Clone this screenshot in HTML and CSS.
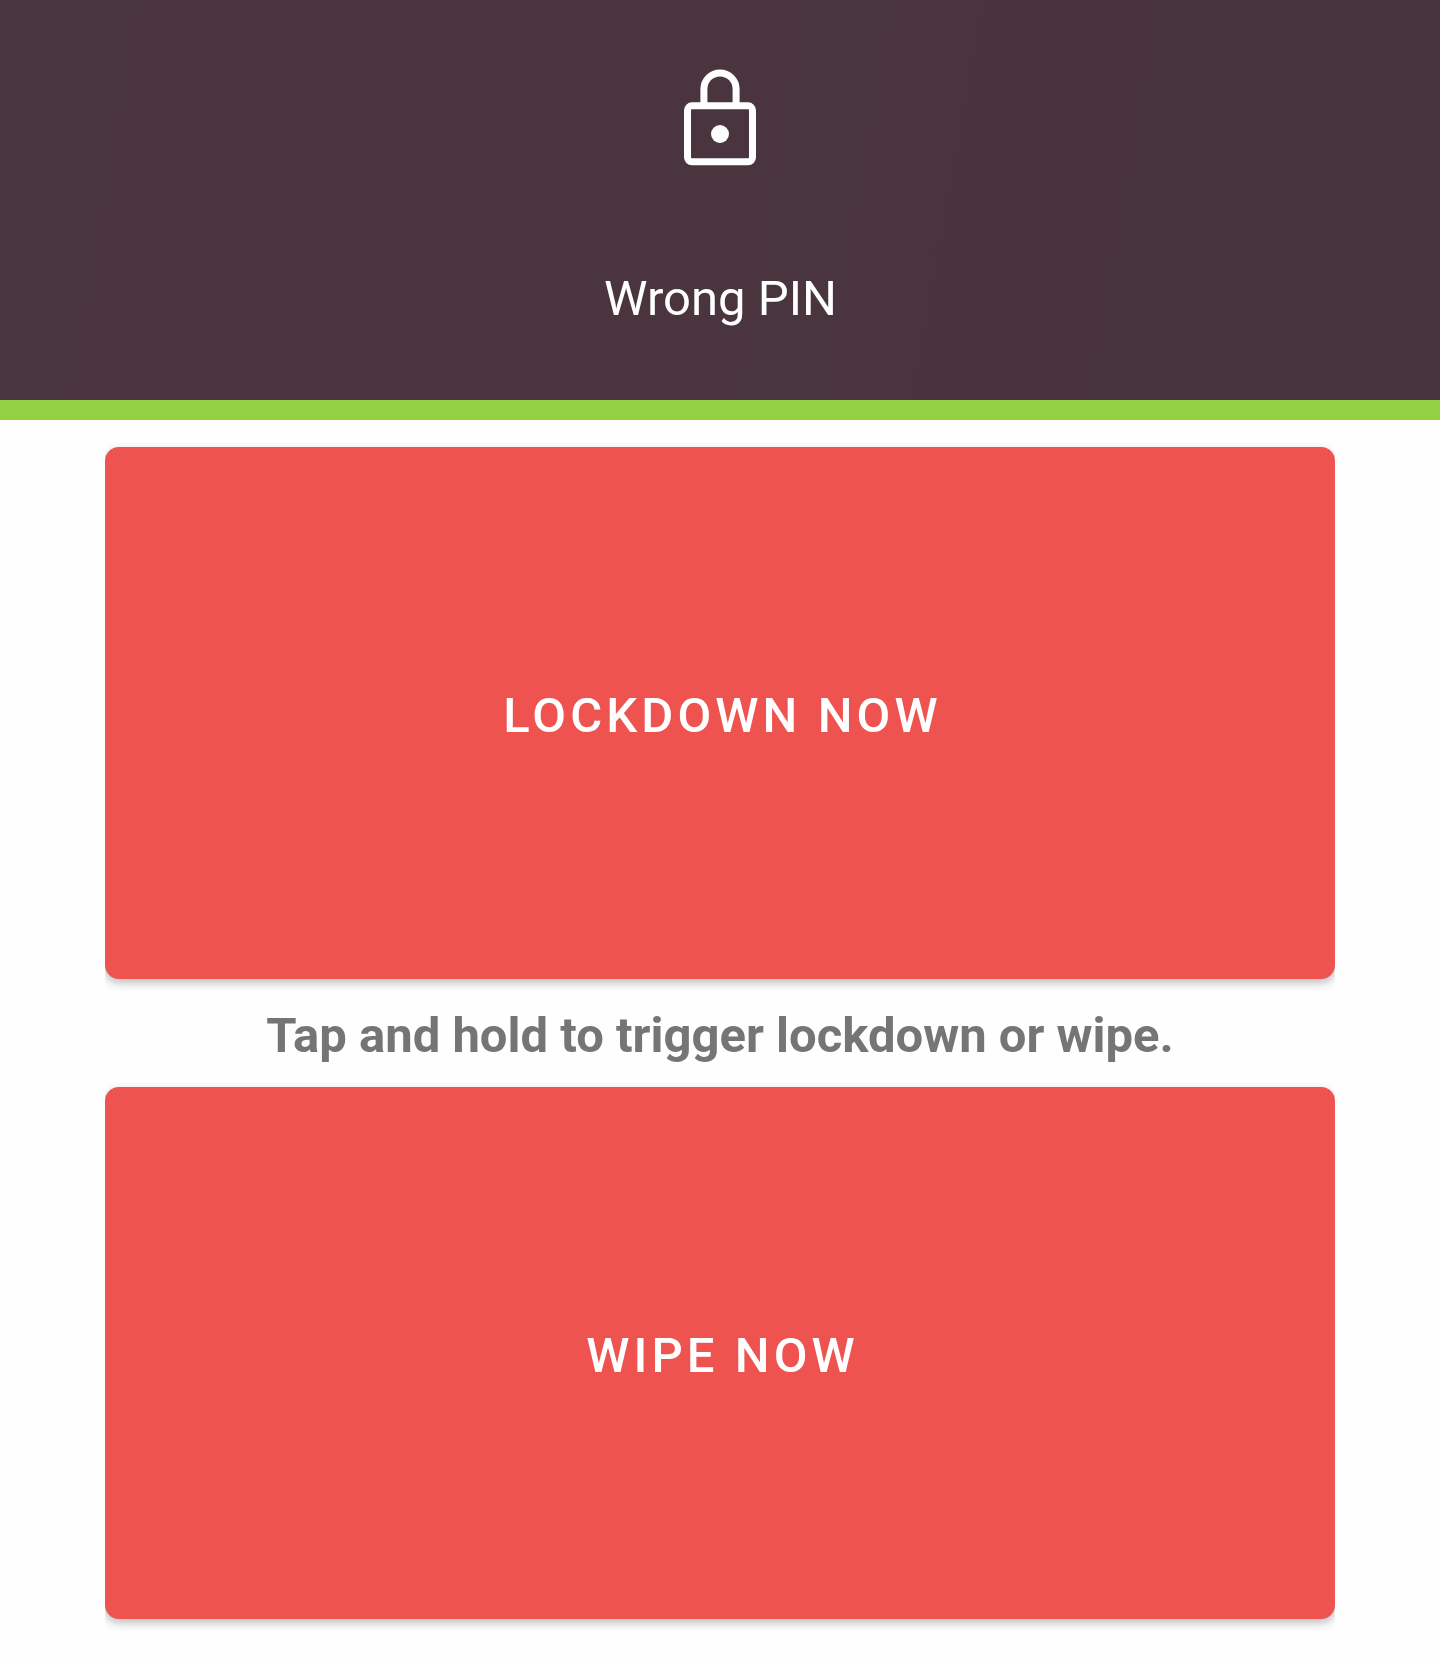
FILE: index.html
```html
<!DOCTYPE html>
<html lang="en">
<head>
<meta charset="utf-8">
<title>Wrong PIN</title>
<link rel="stylesheet" href="styles.css">
</head>
<body>
<header class="header">
  <svg class="lock" viewBox="0 0 120 120" fill="none" stroke="#fff" aria-hidden="true">
    <rect x="27.5" y="55.8" width="65" height="56" rx="4.5" stroke-width="7"/>
    <path d="M43.9 54V39a16.1 16.1 0 0 1 32.2 0V54" stroke-width="7"/>
    <circle cx="60" cy="84" r="9" fill="#fff" stroke="none"/>
  </svg>
  <h1 class="title">Wrong PIN</h1>
</header>
<main class="actions">
  <button class="action" type="button">LOCKDOWN NOW</button>
  <p class="hint">Tap and hold to trigger lockdown or wipe.</p>
  <button class="action" type="button">WIPE NOW</button>
</main>
</body>
</html>
```
FILE: styles.css
```css
* {
  box-sizing: border-box;
}

body {
  margin: 0;
  min-height: 1661px;
  background: #fefefe;
  font-family: Roboto, sans-serif;
  font-size: 49px;
  line-height: 58px;
}

.header {
  display: flex;
  flex-direction: column;
  align-items: center;
  gap: 100px;
  height: 420px;
  padding-top: 50px;
  border-bottom: 20px solid #92d044;
  background: linear-gradient(100deg, #4a363e 0%, #4a353e 50%, #48343c 100%);
  color: #fff;
}

.lock {
  width: 120px;
  height: 120px;
}

.title {
  margin: 0;
  padding-left: 1px;
  font-size: inherit;
  font-weight: 400;
}

.actions {
  display: flex;
  flex-direction: column;
  padding: 27px 105px 0;
}

.action {
  height: 532px;
  padding: 6px 0 0 5px;
  border: 0;
  border-radius: 14px;
  background: #ef5350;
  box-shadow: 0 4px 10px rgba(0, 0, 0, 0.26);
  clip-path: inset(-20px 0);
  color: #fff;
  font: 500 49px/58px Roboto, sans-serif;
  letter-spacing: 4.1px;
}

.hint {
  margin: 28px 0 22px;
  color: #757575;
  font-weight: 700;
  text-align: center;
}
```
